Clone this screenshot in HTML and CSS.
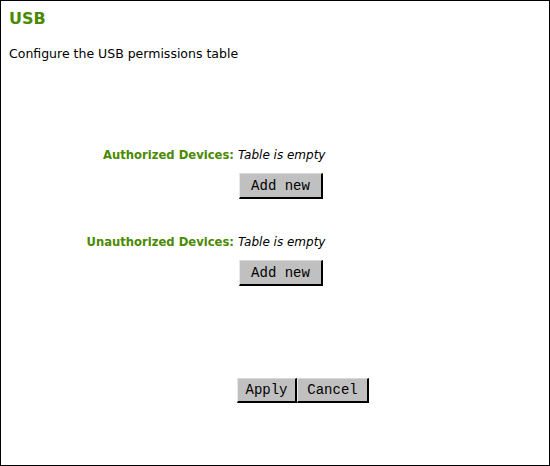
FILE: index.html
```html
<!DOCTYPE html>
<html lang="en">
<head>
    <meta charset="UTF-8">
    <title>USB</title>
    <link rel="stylesheet" href="styles.css">
</head>
<body>
    <div class="page">
        <h1 class="title">USB</h1>
        <p class="intro">Configure the USB permissions table</p>

        <div class="form">
            <div class="label">Authorized Devices:</div>
            <div class="value">Table is empty</div>
            <div class="action"><button class="btn btn-add">Add new</button></div>

            <div class="label gap">Unauthorized Devices:</div>
            <div class="value gap">Table is empty</div>
            <div class="action"><button class="btn btn-add">Add new</button></div>
        </div>

        <div class="footer">
            <button class="btn btn-apply">Apply</button><button class="btn btn-cancel">Cancel</button>
        </div>
    </div>
</body>
</html>
```

FILE: styles.css
```css
body {
    margin: 0;
    font-family: "DejaVu Sans", Verdana, sans-serif;
    font-size: 12px;
    color: #000;
    background: #fff;
}
.page {
    width: 550px;
    height: 466px;
    box-sizing: border-box;
    border: 1px solid #000;
    padding: 0 8px;
}
.title {
    margin: 0;
    padding-top: 8px;
    font-size: 16px;
    line-height: 20px;
    color: #4a8a00;
}
.intro {
    margin: 0;
    padding-top: 17px;
    font-size: 12.5px;
    line-height: 16px;
}
.form {
    display: grid;
    grid-template-columns: 225px auto;
    column-gap: 4px;
    margin-top: 85px;
}
.label {
    text-align: right;
    font-weight: bold;
    font-size: 11.6px;
    color: #4a8a00;
    line-height: 16px;
}
.value {
    font-style: italic;
    line-height: 16px;
}
.gap {
    margin-top: 35px;
}
.action {
    grid-column: 2;
    padding-top: 10px;
}
.btn {
    font-family: "Liberation Mono", "Courier New", monospace;
    font-size: 14px;
    background: #c0c0c0;
    color: #000;
    border-style: solid;
    border-width: 1px 2px 2px 1px;
    border-color: #d8d8d8 #000 #000 #e8e8e8;
    padding: 0;
    height: 26px;
    margin: 0;
}
.btn-add {
    width: 84px;
    margin-left: 1px;
}
.btn-apply {
    width: 60px;
    height: 25px;
}
.btn-cancel {
    width: 72px;
    height: 25px;
}
.footer {
    margin-top: 92px;
    padding-left: 228px;
}
```
